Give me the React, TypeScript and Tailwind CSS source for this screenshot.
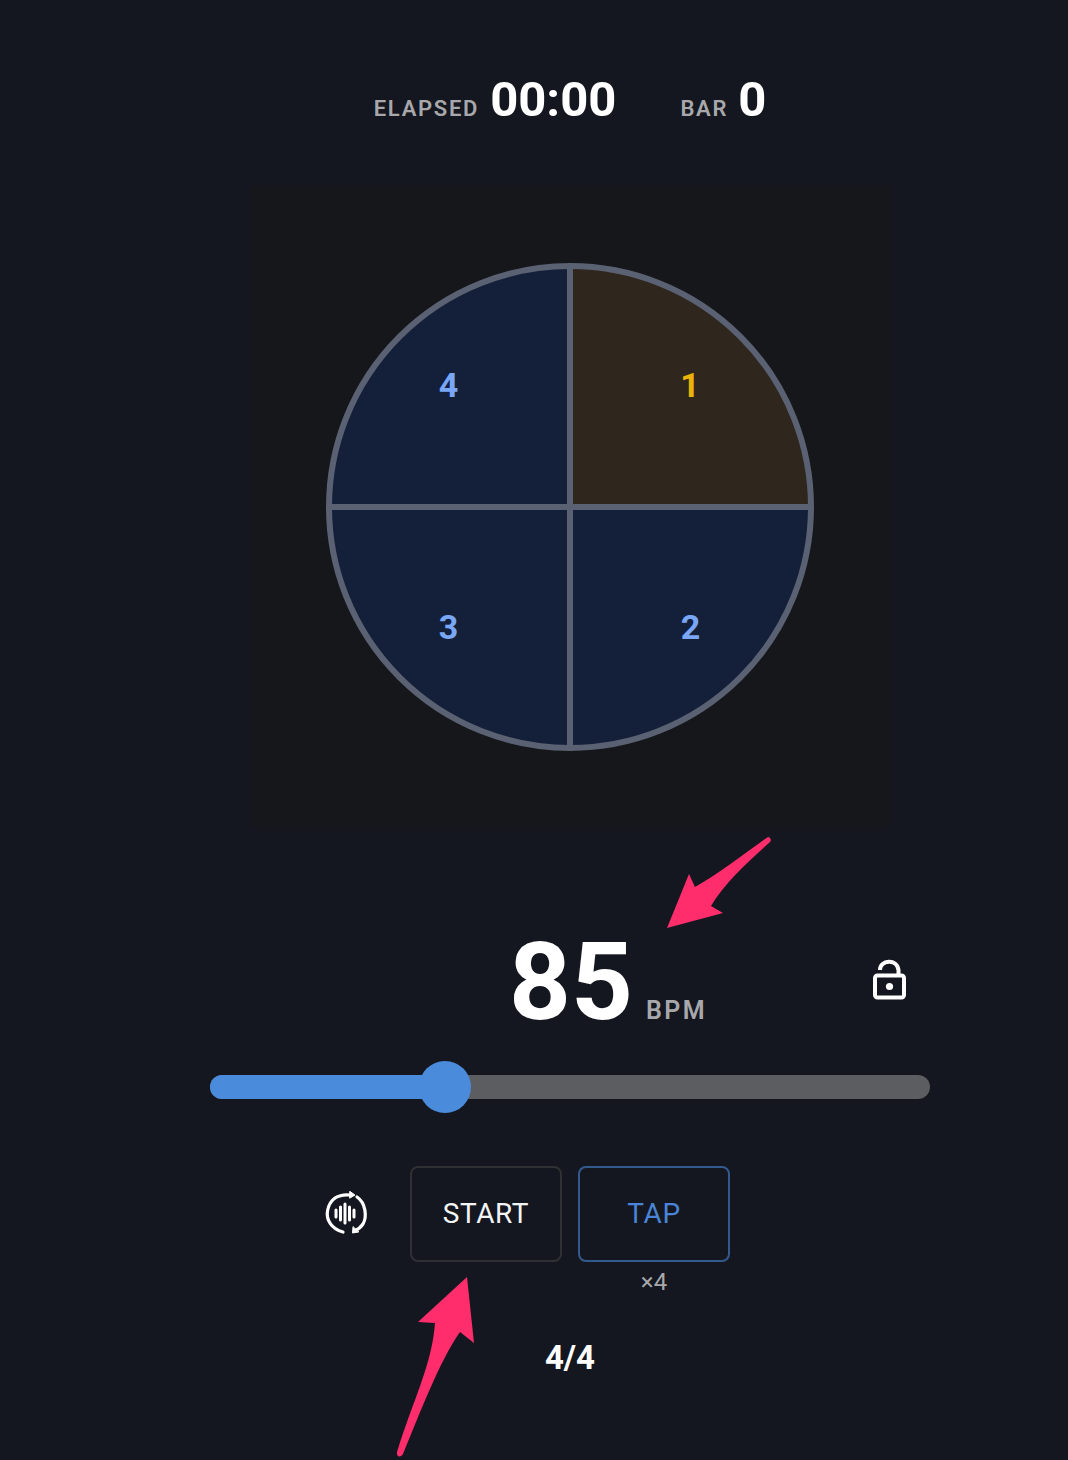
import React from 'react';

const beats = [
  { n: '4', x: 448.5, y: 385, color: 'fill-[#7aa7f5]' },
  { n: '1', x: 690, y: 385, color: 'fill-[#eab308]' },
  { n: '3', x: 448.5, y: 627, color: 'fill-[#7aa7f5]' },
  { n: '2', x: 690.5, y: 627, color: 'fill-[#7aa7f5]' },
];

const BeatWheel = () => (
  <svg width="640" height="640" viewBox="250 187 640 640" className="block">
    <path d="M570 507 L570 265 A242 242 0 0 1 812 507 Z" fill="#2f261d" />
    <path d="M570 507 L812 507 A242 242 0 0 1 570 749 Z" fill="#14203a" />
    <path d="M570 507 L570 749 A242 242 0 0 1 328 507 Z" fill="#14203a" />
    <path d="M570 507 L328 507 A242 242 0 0 1 570 265 Z" fill="#14203a" />
    <circle cx="570" cy="507" r="241" fill="none" stroke="#5a6172" strokeWidth="6" />
    <path d="M570 265 V749 M328 507 H812" stroke="#5a6172" strokeWidth="6" />
    {beats.map((b) => (
      <text
        key={b.n}
        x={b.x}
        y={b.y}
        textAnchor="middle"
        dominantBaseline="central"
        className={`${b.color} font-bold text-[34px]`}
      >
        {b.n}
      </text>
    ))}
  </svg>
);

const LockIcon = () => (
  <svg width="36" height="48" viewBox="0 0 36 48" fill="none" stroke="#fff" strokeWidth="4" strokeLinecap="butt">
    <rect x="4" y="19.5" width="29" height="22" rx="2.5" />
    <path d="M9 14 C9 4 26 2 27.5 14 V19" />
    <circle cx="18.5" cy="30.5" r="3.6" fill="#fff" stroke="none" />
  </svg>
);

const SyncWaveIcon = () => (
  <svg width="44" height="46" viewBox="0 0 44 46" fill="none" stroke="#fff" strokeLinecap="round">
    <path d="M19 41 C7 38 2 28 3.5 20 C5.5 8 14 3 26 4" strokeWidth="3.2" />
    <path d="M26 0.5 L31 4 L26 7 Z" fill="#fff" strokeWidth="1" />
    <path d="M33 6 C42 12 43 26 39 33 C37 36 34 38.5 31 39.5" strokeWidth="3.2" />
    <path d="M29 36 L28.5 42 L34.5 41 Z" fill="#fff" strokeWidth="1" />
    <path d="M12 19 V26 M16.5 16 V29 M21 13 V32 M25.5 16 V29 M30 19 V26" strokeWidth="3" />
  </svg>
);

const Arrows = () => (
  <>
    <svg className="absolute left-[650px] top-[825px]" width="140" height="115" viewBox="0 0 140 115">
      <path
        d="M118 12 C120 12 122 15 120 17 C100 35 75 57 61 81 L73 88 L17 103 L39 49 L45 62 C70 48 95 28 118 12 Z"
        fill="#ff2d6b"
      />
    </svg>
    <svg className="absolute left-[385px] top-[1265px]" width="100" height="195" viewBox="0 0 100 195">
      <path
        d="M82 12 L89 78 L75 67 C55 95 34 150 18 189 C16 193 11 192 12 187 C28 135 47 100 50 58 L33 57 Z"
        fill="#ff2d6b"
      />
    </svg>
  </>
);

export default function App() {
  return (
    <div className="relative h-[1460px] w-[1068px] overflow-hidden bg-[#14171f] font-['Roboto',sans-serif] text-white">
      <div className="flex w-[1140px] flex-col items-center">
        <div className="mt-[63px] flex h-[67px] items-baseline">
          <span className="text-[22px] font-semibold tracking-[1.7px] text-[#a8a8ac]">ELAPSED</span>
          <span className="ml-[11px] text-[49px] font-bold">00:00</span>
          <span className="ml-[64px] text-[22px] font-semibold tracking-[1.7px] text-[#a8a8ac]">BAR</span>
          <span className="ml-[10px] text-[49px] font-bold">0</span>
        </div>

        <div className="mt-[57px] h-[640px] w-[640px] bg-[#16171b]">
          <BeatWheel />
        </div>

        <div className="relative mt-[95px] flex h-[120px] w-[720px] items-baseline justify-center pl-[76px]">
          <span className="text-[108px] font-bold leading-[120px]">85</span>
          <span className="ml-[13px] text-[25px] font-semibold tracking-[2.4px] text-[#a8a8ac]">BPM</span>
          <div className="absolute left-[661px] top-[34px]">
            <LockIcon />
          </div>
        </div>

        <div className="relative mt-[33px] h-6 w-[720px] rounded-full bg-[#5c5d60]">
          <div className="h-6 w-[235px] rounded-full bg-[#4b8bdc]" />
          <div className="absolute left-[209px] top-[-14px] h-[52px] w-[52px] rounded-full bg-[#4b8bdc]" />
        </div>

        <div className="mt-[67px] flex items-start gap-4">
          <div className="mr-[26px] flex h-[96px] w-[44px] items-center justify-center">
            <SyncWaveIcon />
          </div>
          <button className="h-[96px] w-[152px] rounded-lg border-2 border-[#2e3033] text-[28px] tracking-[0.6px] text-[#f3f4f6]">
            START
          </button>
          <div className="flex flex-col items-center">
            <button className="h-[96px] w-[152px] rounded-lg border-2 border-[#335a8c] text-[28px] tracking-[0.6px] text-[#4a84d6]">
              TAP
            </button>
            <span className="mt-[4px] text-[24px] leading-[32px] text-[#a8a8ac]">×4</span>
          </div>
          <div className="ml-[26px] w-[44px]" />
        </div>

        <div className="mt-[40px] text-[33px] font-bold leading-[40px]">4/4</div>
      </div>
      <Arrows />
    </div>
  );
}
